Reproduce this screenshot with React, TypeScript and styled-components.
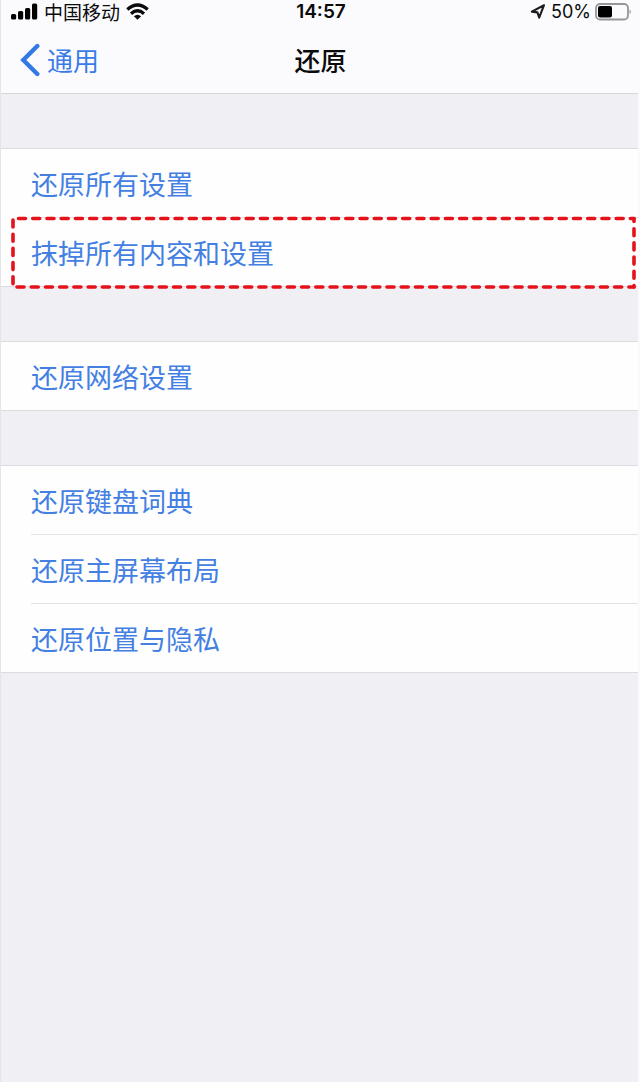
import React from "react";
import styled, { createGlobalStyle } from "styled-components";

const GlobalStyle = createGlobalStyle`
  * { box-sizing: border-box; }
  body {
    margin: 0;
    background: #efeff4;
    font-family: Inter, "Noto Sans CJK SC", sans-serif;
    color: #0b0b0c;
  }
`;

const Screen = styled.div`
  min-height: 100vh;
  background: #efeff4;
  border-left: 1px solid #e4e4e9;
  border-right: 2px solid #fafafc;
`;

const Header = styled.header`
  background: #fbfbfd;
  border-bottom: 1px solid #d6d6d9;
`;

const StatusBar = styled.div`
  display: grid;
  grid-template-columns: 1fr auto 1fr;
  align-items: center;
  height: 24px;
  padding: 0 6px 0 9px;
  font-size: 18px;
  line-height: 24px;
`;

const StatusGroup = styled.div<{ $end?: boolean }>`
  display: flex;
  align-items: center;
  justify-content: ${(p) => (p.$end ? "flex-end" : "flex-start")};
  gap: ${(p) => (p.$end ? 4 : 6)}px;
  svg { flex: none; }
`;

const Carrier = styled.span`
  font-family: "Noto Sans CJK SC", sans-serif;
  font-size: 19px;
`;

const Clock = styled.time`
  font-size: 19px;
  font-weight: 600;
`;

const NavBar = styled.nav`
  display: grid;
  grid-template-columns: 1fr auto 1fr;
  align-items: center;
  height: 69px;
  padding: 2px 16px 0 18px;
`;

const BackButton = styled.button`
  display: flex;
  align-items: center;
  justify-self: start;
  gap: 6px;
  padding: 0;
  border: 0;
  background: none;
  color: #3b7be8;
  font: 400 26px/40px "Noto Sans CJK SC", sans-serif;
  cursor: pointer;
`;

const Title = styled.h1`
  margin: 0;
  font: 500 26px/40px "Noto Sans CJK SC", sans-serif;
`;

const Content = styled.main`
  display: flex;
  flex-direction: column;
  gap: 54px;
  padding: 54px 0;
`;

const Group = styled.ul`
  margin: 0;
  padding: 0;
  list-style: none;
  background: #fefefe;
  border-top: 1px solid #dcdce0;
  border-bottom: 1px solid #dcdce0;
`;

const Row = styled.li`
  position: relative;
  padding-left: 30px;
`;

const RowButton = styled.button<{ $divided: boolean }>`
  display: block;
  width: 100%;
  padding: 2px 0 0;
  border: 0;
  border-bottom: ${(p) => (p.$divided ? "1px solid #e3e3e6" : "0")};
  background: none;
  color: #4480e2;
  font: 400 27px/66px "Noto Sans CJK SC", sans-serif;
  text-align: left;
  cursor: pointer;
`;

const Highlight = styled.svg`
  position: absolute;
  top: 0;
  left: 12px;
  width: calc(100% - 16px);
  height: 69px;
  overflow: visible;
  pointer-events: none;
  stroke: #e3121b;
  stroke-width: 3.6;
  stroke-linecap: round;
`;

const groups = [
  ["还原所有设置", "抹掉所有内容和设置"],
  ["还原网络设置"],
  ["还原键盘词典", "还原主屏幕布局", "还原位置与隐私"],
];
const highlighted = "抹掉所有内容和设置";

function DashedOutline() {
  return (
    <Highlight aria-hidden="true">
      <line x1="5.5" y1="0.5" x2="100%" y2="0.5" strokeDasharray="7 7.23" />
      <line x1="4" y1="69" x2="100%" y2="69" strokeDasharray="7 7.23" />
      <line x1="0" y1="2" x2="0" y2="67" strokeDasharray="7 7.2" />
      <line x1="100%" y1="0.5" x2="100%" y2="69" strokeDasharray="7 7.2" strokeDashoffset="4" />
    </Highlight>
  );
}

function Signal() {
  return (
    <svg width="28" height="18" viewBox="0 0 28 18" aria-hidden="true">
      <rect x="1" y="11" width="5.2" height="5.5" rx="1.6" />
      <rect x="8" y="8" width="5.2" height="8.5" rx="1.6" />
      <rect x="15" y="5" width="5.2" height="11.5" rx="1.6" />
      <rect x="22" y="0.5" width="5.2" height="16" rx="1.6" />
    </svg>
  );
}

function Wifi() {
  return (
    <svg width="23" height="18" viewBox="0 0 24 18" fill="none" stroke="#0b0b0c" strokeWidth="3.4" aria-hidden="true">
      <path d="M1.4 6.4Q12 -3 22.6 6.4" />
      <path d="M5.2 10.8Q12 4.6 18.8 10.8" />
      <path d="M12 17.2L8.2 13.4Q12 10.2 15.8 13.4Z" fill="#0b0b0c" stroke="none" />
    </svg>
  );
}

function LocationArrow() {
  return (
    <svg width="17" height="18" viewBox="0 0 17 18" fill="none" stroke="#1c1c1e" strokeWidth="2.1" strokeLinejoin="round" aria-hidden="true">
      <path d="M14 2.2L1.8 8.6L7.4 9.4L9.2 14.6Z" />
    </svg>
  );
}

function Battery() {
  return (
    <svg width="37" height="18" viewBox="0 0 37 18" aria-hidden="true">
      <rect x="1" y="1" width="32" height="15.5" rx="4" fill="none" stroke="#96969a" strokeWidth="1.8" />
      <rect x="3" y="3" width="14" height="11.5" rx="2" fill="#000" />
      <path d="M34.6 6.5Q37.2 8.7 34.6 11Z" fill="#96969a" />
    </svg>
  );
}

export default function App() {
  return (
    <Screen>
      <GlobalStyle />
      <Header>
        <StatusBar>
          <StatusGroup>
            <Signal />
            <Carrier>中国移动</Carrier>
            <Wifi />
          </StatusGroup>
          <Clock>14:57</Clock>
          <StatusGroup $end>
            <LocationArrow />
            <span>50%</span>
            <Battery />
          </StatusGroup>
        </StatusBar>
        <NavBar>
          <BackButton type="button">
            <svg width="22" height="34" viewBox="0 0 22 34" fill="none" stroke="#3478e5" strokeWidth="4.4" strokeLinecap="round" strokeLinejoin="miter" aria-hidden="true">
              <path d="M18.3 3L4.3 17L18.3 31" />
            </svg>
            通用
          </BackButton>
          <Title>还原</Title>
        </NavBar>
      </Header>
      <Content>
        {groups.map((rows) => (
          <Group key={rows[0]}>
            {rows.map((label, i) => (
              <Row key={label}>
                <RowButton type="button" $divided={i < rows.length - 1}>
                  {label}
                </RowButton>
                {label === highlighted && <DashedOutline />}
              </Row>
            ))}
          </Group>
        ))}
      </Content>
    </Screen>
  );
}
